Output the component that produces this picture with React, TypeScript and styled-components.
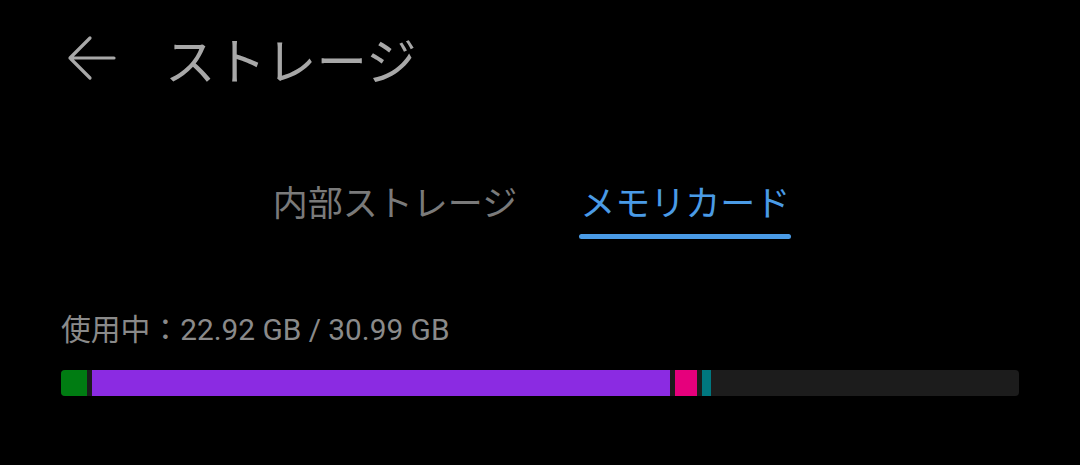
import { createGlobalStyle } from "styled-components";
import styled from "styled-components";

const GlobalStyle = createGlobalStyle`
  html, body {
    margin: 0;
    padding: 0;
    background: #000;
  }
  body {
    font-family: Roboto, "Noto Sans CJK JP", sans-serif;
  }
`;

const Screen = styled.div`
  width: 1080px;
  height: 465px;
  background: #000;
  display: flex;
  flex-direction: column;
  overflow: hidden;
`;

const Header = styled.header`
  display: flex;
  align-items: center;
  height: 48px;
  margin-top: 34px;
  padding-left: 66px;
`;

const BackButton = styled.button`
  display: flex;
  align-items: center;
  justify-content: center;
  width: 50px;
  height: 48px;
  padding: 0;
  border: none;
  background: none;
  color: #a8a8a8;
`;

const Title = styled.h1`
  margin: 0 0 0 49px;
  font-family: "Noto Sans CJK JP", sans-serif;
  font-size: 50.5px;
  line-height: 48px;
  font-weight: 400;
  color: #a8a8a8;
`;

const Tabs = styled.nav`
  display: flex;
  justify-content: center;
  gap: 63px;
  margin-top: 101px;
  padding-right: 17px;
`;

const Tab = styled.div<{ $active?: boolean }>`
  display: flex;
  flex-direction: column;
  align-items: center;
  font-family: "Noto Sans CJK JP", sans-serif;
  font-size: 35px;
  line-height: 36px;
  color: ${(p) => (p.$active ? "#4a9be6" : "#7a7a7a")};

  &::after {
    content: "";
    display: block;
    width: calc(100% + 2px);
    height: 5px;
    margin-top: 15px;
    border-radius: 3px;
    background: ${(p) => (p.$active ? "#4a9be6" : "transparent")};
  }
`;

const Usage = styled.section`
  display: flex;
  flex-direction: column;
  padding: 0 61px;
  margin-top: 76px;
`;

const UsageText = styled.div`
  font-family: Roboto, "Noto Sans CJK JP", sans-serif;
  font-size: 29.8px;
  line-height: 30px;
  color: #8a8a8a;
`;

const Bar = styled.div`
  display: flex;
  gap: 5px;
  height: 26px;
  margin-top: 25px;
  border-radius: 4px;
  background: #1c1c1c;
  overflow: hidden;
`;

const Segment = styled.div<{ $color: string }>`
  flex: none;
  height: 100%;
  background: ${(p) => p.$color};
`;

const segments = [
  { color: "#007c12", width: 26 },
  { color: "#8b2be2", width: 578 },
  { color: "#e6007c", width: 22 },
  { color: "#00777f", width: 9 },
];

export default function App() {
  return (
    <Screen>
      <GlobalStyle />
      <Header>
        <BackButton aria-label="戻る">
          <svg width="50" height="46" viewBox="0 0 50 46" fill="none">
            <path
              d="M48 23H4M24 3L4 23l20 20"
              stroke="currentColor"
              strokeWidth="3.2"
              strokeLinecap="round"
              strokeLinejoin="round"
            />
          </svg>
        </BackButton>
        <Title>ストレージ</Title>
      </Header>
      <Tabs>
        <Tab>内部ストレージ</Tab>
        <Tab $active>メモリカード</Tab>
      </Tabs>
      <Usage>
        <UsageText>使用中：22.92 GB / 30.99 GB</UsageText>
        <Bar>
          {segments.map((s, i) => (
            <Segment key={i} $color={s.color} style={{ width: s.width }} />
          ))}
        </Bar>
      </Usage>
    </Screen>
  );
}
